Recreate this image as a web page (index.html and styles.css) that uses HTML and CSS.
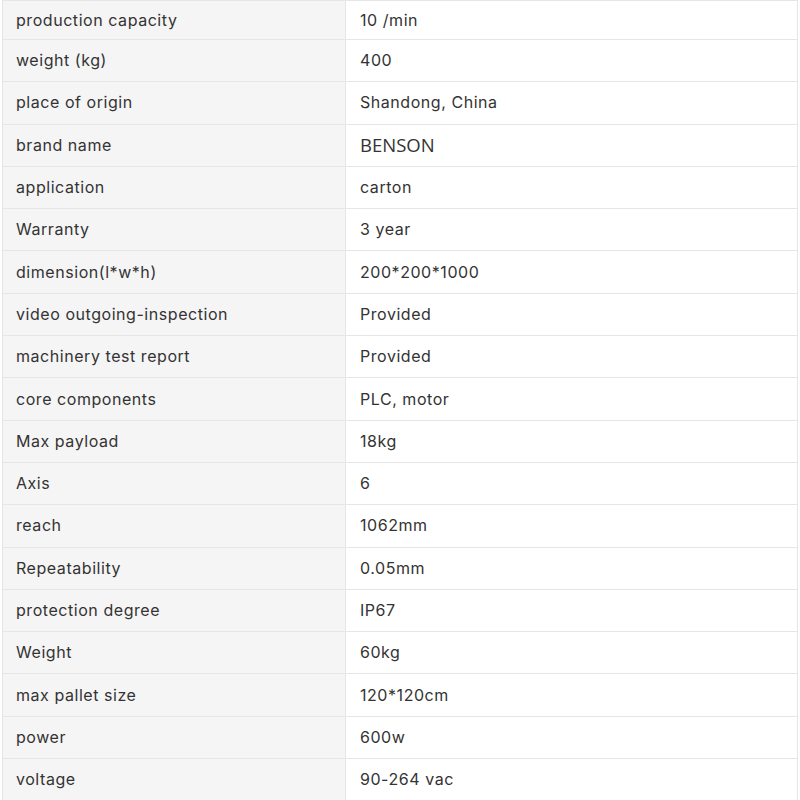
FILE: index.html
```html
<!DOCTYPE html>
<html>
<head>
<meta charset="utf-8">
<link rel="stylesheet" href="styles.css">
</head>
<body>
<div class="specs">
  <div class="row first"><div class="k">production capacity</div><div class="v">10 /min</div></div>
  <div class="row"><div class="k">weight (kg)</div><div class="v">400</div></div>
  <div class="row"><div class="k">place of origin</div><div class="v">Shandong, China</div></div>
  <div class="row"><div class="k">brand name</div><div class="v brand">BENSON</div></div>
  <div class="row"><div class="k">application</div><div class="v">carton</div></div>
  <div class="row"><div class="k">Warranty</div><div class="v">3 year</div></div>
  <div class="row"><div class="k">dimension(l*w*h)</div><div class="v">200*200*1000</div></div>
  <div class="row"><div class="k">video outgoing-inspection</div><div class="v">Provided</div></div>
  <div class="row"><div class="k">machinery test report</div><div class="v">Provided</div></div>
  <div class="row"><div class="k">core components</div><div class="v">PLC, motor</div></div>
  <div class="row"><div class="k">Max payload</div><div class="v">18kg</div></div>
  <div class="row"><div class="k">Axis</div><div class="v">6</div></div>
  <div class="row"><div class="k">reach</div><div class="v">1062mm</div></div>
  <div class="row"><div class="k">Repeatability</div><div class="v">0.05mm</div></div>
  <div class="row"><div class="k">protection degree</div><div class="v">IP67</div></div>
  <div class="row"><div class="k">Weight</div><div class="v">60kg</div></div>
  <div class="row"><div class="k">max pallet size</div><div class="v">120*120cm</div></div>
  <div class="row"><div class="k">power</div><div class="v">600w</div></div>
  <div class="row"><div class="k">voltage</div><div class="v">90-264 vac</div></div>
</div>
</body>
</html>
```
FILE: styles.css
```css
html, body {
  margin: 0;
  padding: 0;
  background: #ffffff;
}
body {
  font-family: Inter, "Liberation Sans", sans-serif;
  font-size: 16px;
  letter-spacing: 0.55px;
  color: #333333;
  overflow: hidden;
}
.specs {
  margin: 0 2px 0 2px;
  border-left: 1px solid #e6e6e6;
  border-right: 1px solid #e6e6e6;
  border-top: 1px solid #e6e6e6;
}
.row {
  display: grid;
  grid-template-columns: 343px 1fr;
  height: 42.3px;
  box-sizing: border-box;
  border-bottom: 1px solid #e6e6e6;
}
.row.first {
  height: 39px;
}
.k, .v {
  display: flex;
  align-items: center;
  padding-left: 13px;
  padding-bottom: 1px;
}
.k {
  background: #f5f5f5;
  border-right: 1px solid #e6e6e6;
}
.v {
  padding-left: 14px;
  background: #ffffff;
}
.brand {
  font-family: "Open Sans", "Liberation Sans", sans-serif;
  font-size: 18.5px;
  letter-spacing: 0;
}
```
